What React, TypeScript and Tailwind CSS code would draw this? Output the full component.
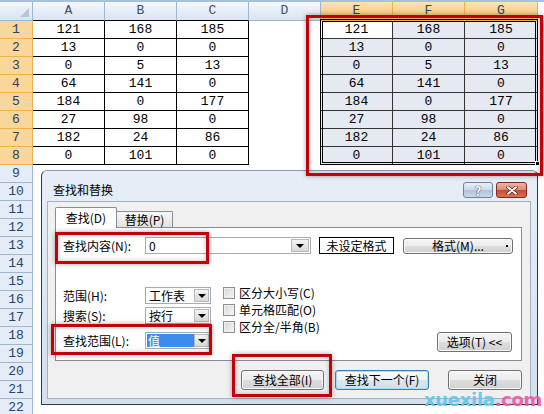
import React from 'react';

// sheet values, reused for A:C and E:G
const values = [
  [121, 168, 185],
  [13, 0, 0],
  [0, 5, 13],
  [64, 141, 0],
  [184, 0, 177],
  [27, 98, 0],
  [182, 24, 86],
  [0, 101, 0],
];

const COLS = ['A', 'B', 'C', 'D', 'E', 'F', 'G'];
const rows = Array.from({ length: 22 }, (_, i) => i + 1);

const MONO = "font-['Liberation_Mono','DejaVu_Sans_Mono',monospace]";
const CJK = "font-['Noto_Sans_CJK_SC','Noto_Sans',sans-serif]";

const btnBg = 'bg-[linear-gradient(to_bottom,#f4f4f4_0%,#ececec_48%,#dedede_52%,#d0d0d0_100%)]';

const Button = ({ children, className = '', focused = false }: { children: React.ReactNode; className?: string; focused?: boolean }) => (
  <div
    className={`h-[20px] shrink-0 rounded-[3px] border flex items-center justify-center text-[12px] leading-none text-black ${
      focused
        ? 'border-[#3c7fb1] bg-[linear-gradient(to_bottom,#f6fbfe_0%,#eef6fb_48%,#dde8ee_52%,#d3dde3_100%)] shadow-[inset_0_0_0_1px_#a9dcf6]'
        : `border-[#707070] ${btnBg} shadow-[inset_0_0_0_1px_#fafafa]`
    } ${className}`}
  >
    {children}
  </div>
);

const DropBtn = ({ w = 'w-[15px]' }: { w?: string }) => (
  <div className={`${w} my-px mr-px shrink-0 border border-[#b8b8b8] bg-gradient-to-b from-[#f4f4f4] to-[#d9d9d9] flex items-center justify-center`}>
    <div className="w-0 h-0 border-l-[4px] border-r-[4px] border-t-[4px] border-l-transparent border-r-transparent border-t-black" />
  </div>
);

const Combo = ({ value, selected = false }: { value: string; selected?: boolean }) => (
  <div className="w-[66px] h-[17px] shrink-0 border border-[#a5acb5] bg-white flex items-stretch">
    <div className="flex-1 flex items-center pl-px">
      {selected ? (
        <div className="w-[47px] h-[13px] bg-[#3b8ded] text-white flex items-center pl-px">{value}</div>
      ) : (
        <span className="pl-[2px]">{value}</span>
      )}
    </div>
    <DropBtn />
  </div>
);

const CheckRow = ({ label }: { label: string }) => (
  <div className="h-[17px] flex items-center gap-[4px]">
    <div className="w-[12px] h-[12px] border border-[#8e8f8f] bg-gradient-to-br from-[#d6d6d6] to-[#f7f7f7] shadow-[inset_0_0_0_1px_#efefef]" />
    <span>{label}</span>
  </div>
);

const redBox = 'absolute border-[3px] border-[#c40008] shadow-[0_0_5px_rgba(0,0,0,0.35),inset_0_0_5px_rgba(0,0,0,0.25)]';

export default function App() {
  return (
    <div className={`w-[544px] h-[414px] relative overflow-hidden bg-white ${MONO}`}>
      <div className="h-[2px] bg-[#a9c0da]" />

      {/* column headers */}
      <div className="flex h-[19px]">
        <div className="w-[33px] shrink-0 relative border-r border-b border-[#9eb6ce] bg-gradient-to-b from-[#f3f6fb] to-[#d9e4f2]">
          <div className="absolute right-[3px] bottom-[3px] w-0 h-0 border-l-[9px] border-b-[9px] border-l-transparent border-b-[#b5c6db]" />
        </div>
        {COLS.map((c, i) => (
          <div
            key={c}
            className={`${i === 6 ? 'w-[73px]' : 'w-[72px]'} shrink-0 flex items-center justify-center border-r border-b text-[13px] ${
              i >= 4
                ? 'bg-gradient-to-b from-[#fbe3b3] to-[#f6c46c] border-[#efb04f] text-[#2a4470]'
                : 'bg-gradient-to-b from-[#f3f6fb] to-[#d9e4f2] border-[#9eb6ce] text-[#3c4f66]'
            } ${i < 3 ? 'border-b-black' : ''}`}
          >
            {c}
          </div>
        ))}
        <div className="flex-1" />
      </div>

      {/* rows */}
      {rows.map((r) => (
        <div key={r} className="flex h-[18px]">
          <div
            className={`w-[33px] shrink-0 flex items-center justify-center border-r border-b text-[13px] ${
              r <= 8 ? 'bg-[#f9d69a] border-[#f1b24e] text-[#2a3f63]' : 'bg-[#e4ecf7] border-[#9eb6ce] text-[#27466f]'
            }`}
          >
            {r}
          </div>
          {COLS.map((c, i) => {
            const w = i === 6 ? 'w-[73px]' : 'w-[72px]';
            if (r > 8 || i === 3) return <div key={c} className={`${w} shrink-0`} />;
            const v = values[r - 1][i < 3 ? i : i - 4];
            const cls =
              i < 3
                ? 'border-black'
                : `border-[#333] ${r === 1 && i === 4 ? 'bg-white' : 'bg-[#e4e9f2]'}`;
            return (
              <div key={c} className={`${w} shrink-0 border-r border-b ${cls} flex items-center justify-center text-[13px] text-black`}>
                {v}
              </div>
            );
          })}
        </div>
      ))}

      {/* selection E1:G8 */}
      <div className="absolute left-[320px] top-[19px] w-[218px] h-[146px] border-[3px] border-double border-black" />
      <div className="absolute left-[535px] top-[161px] w-[5px] h-[5px] bg-black border border-white" />

      {/* find & replace dialog */}
      <div
        className={`absolute left-[41px] top-[170px] w-[497px] h-[235px] flex flex-col rounded-t-[6px] border border-[#383838] border-t-[#8d9aab] bg-gradient-to-b from-[#e7eef7] to-[#d3dfed] text-[12px] text-black ${CJK}`}
      >
        <div className="h-[30px] shrink-0 flex items-start">
          <div className="ml-[11px] mt-[12px] leading-[14px]">查找和替换</div>
          <div className="ml-auto mr-[10px] mt-[11px] flex gap-[3px]">
            <div className="w-[30px] h-[16px] rounded-[3px] border border-[#6f829a] bg-[linear-gradient(to_bottom,#eaf0f7_0%,#cbd8e8_50%,#aec2da_51%,#c8d9ec_100%)] flex items-center justify-center text-white font-bold text-[13px] leading-none [text-shadow:0_0_1px_#2c3b52,0_0_1px_#2c3b52]">
              ?
            </div>
            <div className="w-[31px] h-[16px] rounded-[3px] border border-[#7d2b22] bg-[linear-gradient(to_bottom,#eeb3a5_0%,#dc8a77_50%,#c84a36_51%,#d97050_100%)] flex items-center justify-center">
              <svg width="12" height="9" viewBox="0 0 12 9">
                <path d="M2 1.2 L10 7.8 M10 1.2 L2 7.8" stroke="#5a1a12" strokeWidth="3.2" strokeLinecap="round" />
                <path d="M2 1.2 L10 7.8 M10 1.2 L2 7.8" stroke="#fff" strokeWidth="2" strokeLinecap="round" />
              </svg>
            </div>
          </div>
        </div>

        <div className="ml-[5px] mr-[6px] mb-[5px] flex-1 flex flex-col bg-[#f0f0f0] border border-[#a3b1c2] px-[7px] pt-[5px]">
          {/* tabs */}
          <div className="flex items-end h-[20px] relative z-10">
            <div className="w-[62px] h-[21px] -mb-px bg-white border border-b-0 border-[#898c95] rounded-t-[2px] flex items-center justify-center">
              查找(D)
            </div>
            <div className="w-[56px] h-[16px] bg-gradient-to-b from-[#f7f7f7] to-[#e2e2e2] border border-l-0 border-b-0 border-[#898c95] rounded-tr-[2px] flex items-center justify-center">
              替换(P)
            </div>
          </div>

          <div className="w-[467px] h-[134px] shrink-0 bg-white border border-[#898c95] flex flex-col">
            <div className="mt-[9px] h-[17px] flex items-center pl-[7px]">
              <div className="w-[82px] shrink-0">查找内容(N):</div>
              <div className="w-[166px] h-[17px] shrink-0 border border-[#a5acb5] bg-white flex items-stretch">
                <div className="flex-1 flex items-center pl-[3px]">0</div>
                <DropBtn w="w-[18px]" />
              </div>
              <div className="ml-[8px] w-[75px] h-[17px] shrink-0 border border-black bg-white flex items-center justify-center">
                未设定格式
              </div>
              <Button className="ml-[9px] w-[110px] !h-[16px] relative">
                格式(M)...
                <span className="absolute right-[4px] top-[6px] w-[2px] h-[2px] bg-black" />
              </Button>
            </div>

            <div className="mt-[33px] flex-1 flex items-start pl-[7px]">
              <div className="flex flex-col">
                <div className="h-[17px] flex items-center">
                  <div className="w-[82px] shrink-0">范围(H):</div>
                  <Combo value="工作表" />
                </div>
                <div className="mt-[3px] h-[17px] flex items-center">
                  <div className="w-[82px] shrink-0">搜索(S):</div>
                  <Combo value="按行" />
                </div>
                <div className="mt-[8px] h-[17px] flex items-center">
                  <div className="w-[82px] shrink-0">查找范围(L):</div>
                  <Combo value="值" selected />
                </div>
              </div>
              <div className="ml-[12px] -mt-[3px] flex flex-col">
                <CheckRow label="区分大小写(C)" />
                <CheckRow label="单元格匹配(O)" />
                <CheckRow label="区分全/半角(B)" />
              </div>
              <div className="flex-1 self-stretch flex flex-col justify-end items-end pr-[9px] pb-[8px]">
                <Button className="w-[75px]">选项(T) &lt;&lt;</Button>
              </div>
            </div>
          </div>

          <div className="mt-[9px] flex pl-[186px]">
            <Button className="w-[83px]">查找全部(I)</Button>
            <Button className="ml-[11px] w-[94px]" focused>
              查找下一个(F)
            </Button>
            <Button className="ml-[19px] w-[74px]">关闭</Button>
          </div>
        </div>
      </div>

      {/* red annotation boxes */}
      <div className={`${redBox} left-[306px] top-[15px] w-[237px] h-[161px]`} />
      <div className={`${redBox} left-[55px] top-[232px] w-[154px] h-[32px]`} />
      <div className={`${redBox} left-[51px] top-[324px] w-[161px] h-[31px]`} />
      <div className={`${redBox} left-[232px] top-[354px] w-[100px] h-[43px]`} />

      {/* watermark */}
      <div className="absolute left-[424px] top-[390px] leading-[20px] text-[18px] font-bold font-['DejaVu_Sans',sans-serif] tracking-[-0.3px] opacity-90">
        <span className="text-[#62c7ec]">xuexila</span>
        <span className="text-[#f0589e]">.com</span>
      </div>
    </div>
  );
}
